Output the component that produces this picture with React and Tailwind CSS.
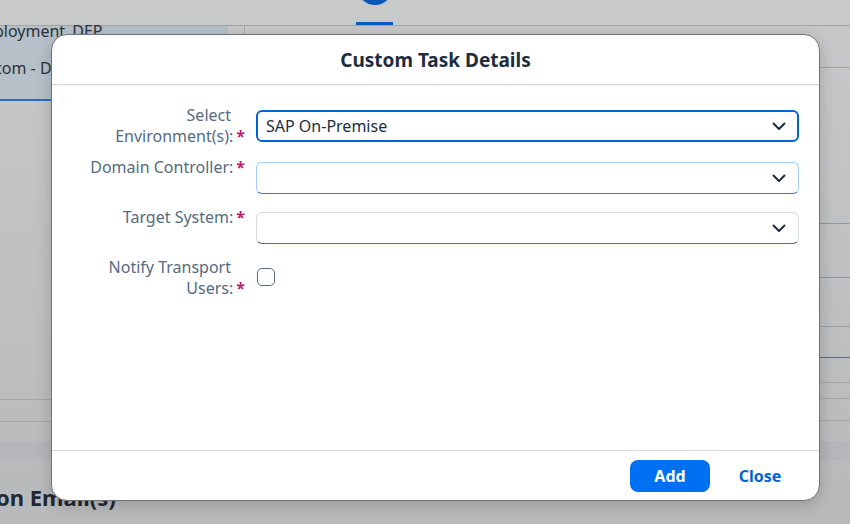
import React from "react";

const Chevron = () => (
  <svg width="14" height="9" viewBox="0 0 14 9" className="shrink-0">
    <path d="M1.5 1.5 L7 7 L12.5 1.5" fill="none" stroke="#1d2d3e" strokeWidth="2" strokeLinecap="round" strokeLinejoin="round" />
  </svg>
);

const Req = () => <span className="ml-[3px] font-bold text-[#c0177a]">*</span>;

export default function App() {
  const font = { fontFamily: '"Noto Sans", "Liberation Sans", Arial, sans-serif' };
  return (
    <div className="relative h-[524px] w-[850px] overflow-hidden bg-gradient-to-b from-[#c7c8c8] to-[#b8b9bb]" style={font}>
      {/* Background page */}
      <div className="flex h-full flex-col">
        <div className="flex h-[26px] shrink-0 flex-col border-b border-[#a4a6a8] bg-[#c8c9c9]">
          <div className="ml-[356px] flex h-full w-[37px] flex-col items-center">
            <div className="-mt-[31px] h-[36px] w-[36px] shrink-0 rounded-full bg-[#0b58bd]" />
            <div className="flex-1" />
            <div className="h-[3px] w-[37px] bg-[#0b58bd]" />
          </div>
        </div>
        <div className="flex h-[415px] shrink-0">
          <div className="flex w-[244px] shrink-0 flex-col">
            <div className="flex h-[75px] w-[228px] flex-col border-b-2 border-[#2f6bc2] bg-[#b5c0c8] text-[16px] leading-[21px] text-[#2b323a]">
              <div className="-ml-[6px] -mt-[5px]">ployment_DEP</div>
              <div className="-ml-[4px] pt-[16px]">tom - D</div>
            </div>
            <div className="h-[298px]" />
            <div className="h-[22px] border-t border-[#a3a5a7]" />
            <div className="h-[20px] border-t border-[#a3a5a7]" />
          </div>
          <div className="flex flex-1 flex-col border-l border-[#a8aaac]">
            <div className="h-[42px] border-b border-[#a3a5a7]" />
            <div className="h-[156px] border-b border-[#8d98a3]" />
            <div className="h-[54px] border-b border-[#8d98a3]" />
            <div className="h-[49px] border-b border-[#9aa0a6]" />
            <div className="h-[31px] border-b border-[#5d6d7e]" />
            <div className="h-[25px] border-b border-[#a3a5a7]" />
            <div className="h-[16px] border-b border-[#a3a5a7]" />
            <div className="h-[22px] border-b border-[#a3a5a7]" />
          </div>
        </div>
        <div className="h-[19px] shrink-0 bg-[#b4b6b9]" />
        <div className="flex flex-1 items-center">
          <div className="-ml-[4px] mt-[10px] text-[22px] font-bold leading-[26px] text-[#1f2933]">on Email(s)</div>
        </div>
      </div>

      {/* Dialog */}
      <div className="absolute left-[51px] top-[34px] flex h-[467px] w-[769px] flex-col overflow-hidden rounded-[16px] border border-[#707478] bg-white shadow-[0_4px_16px_rgba(0,0,0,0.18)]">
        <div className="flex h-[50px] shrink-0 items-center justify-center border-b border-[#d9d9d9] shadow-[0_1px_2px_rgba(0,0,0,0.05)]">
          <div className="text-[19px] font-bold leading-[24px] text-[#1d2d3e]">Custom Task Details</div>
        </div>
        <div className="flex flex-1 flex-col pl-[15px] pr-[20px] pt-[20px] text-[16px] leading-[21px]">
          <div className="flex h-[52px] items-start">
            <div className="w-[178px] text-right text-[#556b82]">
              <div className="pr-[14px]">Select</div>
              <div>Environment(s):<Req /></div>
            </div>
            <div className="ml-[11px] mt-[5px] flex h-[32px] flex-1 items-center justify-between rounded-[6px] border-2 border-[#0064d9] pl-[8px] pr-[11px] text-[#1d2d3e]">
              <span>SAP On-Premise</span>
              <Chevron />
            </div>
          </div>
          <div className="flex h-[50px] items-start">
            <div className="w-[178px] text-right text-[#556b82]">
              <div>Domain Controller:<Req /></div>
            </div>
            <div className="ml-[11px] mt-[5px] flex h-[32px] flex-1 items-center justify-end rounded-[6px] border border-b-[#3d7ccc] border-l-[#a6ccf6] border-r-[#a6ccf6] border-t-[#a6ccf6] pr-[12px]">
              <Chevron />
            </div>
          </div>
          <div className="flex h-[50px] items-start">
            <div className="w-[178px] text-right text-[#556b82]">
              <div>Target System:<Req /></div>
            </div>
            <div className="ml-[11px] mt-[5px] flex h-[32px] flex-1 items-center justify-end rounded-[6px] border border-b-[#556b82] border-l-[#d5dadf] border-r-[#d5dadf] border-t-[#d5dadf] pr-[12px]">
              <Chevron />
            </div>
          </div>
          <div className="flex items-start">
            <div className="w-[178px] text-right text-[#556b82]">
              <div className="pr-[14px]">Notify Transport</div>
              <div>Users:<Req /></div>
            </div>
            <div className="ml-[12px] mt-[11px] h-[18px] w-[18px] rounded-[5px] border border-[#556b82] bg-white" />
          </div>
        </div>
        <div className="flex h-[50px] shrink-0 items-center justify-end gap-[10px] border-t border-[#d9d9d9] pr-[19px]">
          <button className="flex h-[32px] w-[80px] items-center justify-center rounded-[8px] bg-[#0070f2] text-[16px] font-bold text-white">Add</button>
          <button className="flex h-[32px] w-[80px] items-center justify-center rounded-[8px] text-[16px] font-bold text-[#0064d9]">Close</button>
        </div>
      </div>
    </div>
  );
}
